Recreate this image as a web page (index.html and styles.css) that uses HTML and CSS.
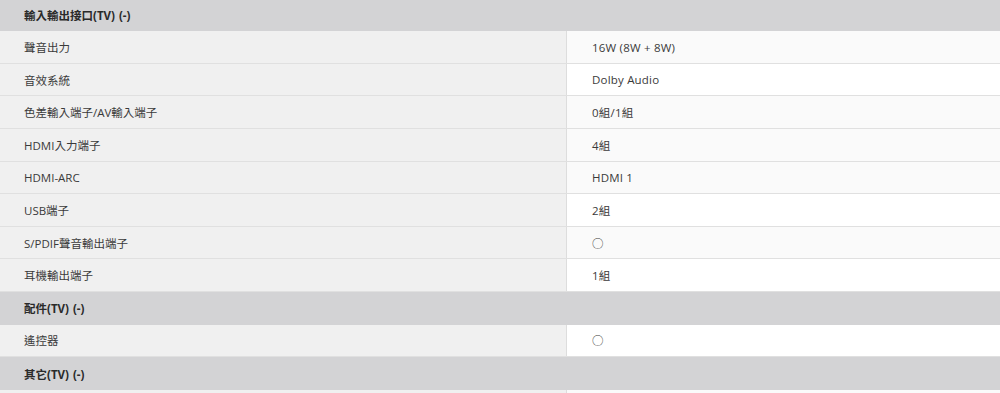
FILE: index.html
```html
<!DOCTYPE html>
<html lang="zh-Hant">
<head>
<meta charset="utf-8">
<link rel="stylesheet" href="styles.css">
</head>
<body>
<div class="spec">
  <div class="head">輸入輸出接口(TV) (-)</div>
  <div class="row alt"><div class="k">聲音出力</div><div class="v">16W (8W + 8W)</div></div>
  <div class="row"><div class="k">音效系統</div><div class="v">Dolby Audio</div></div>
  <div class="row alt"><div class="k">色差輸入端子/AV輸入端子</div><div class="v">0組/1組</div></div>
  <div class="row alt"><div class="k">HDMI入力端子</div><div class="v">4組</div></div>
  <div class="row alt"><div class="k">HDMI-ARC</div><div class="v">HDMI 1</div></div>
  <div class="row"><div class="k">USB端子</div><div class="v">2組</div></div>
  <div class="row alt"><div class="k">S/PDIF聲音輸出端子</div><div class="v">○</div></div>
  <div class="row"><div class="k">耳機輸出端子</div><div class="v">1組</div></div>
  <div class="head">配件(TV) (-)</div>
  <div class="row"><div class="k">遙控器</div><div class="v">○</div></div>
  <div class="head">其它(TV) (-)</div>
  <div class="row alt"><div class="k">&nbsp;</div><div class="v">&nbsp;</div></div>
</div>
</body>
</html>
```

FILE: styles.css
```css
html, body {
  margin: 0;
  padding: 0;
  background: #ffffff;
}
body {
  font-family: "Open Sans", "Noto Sans CJK TC", sans-serif;
  font-size: 11.5px;
  color: #3a3a3a;
  overflow: hidden;
}
.spec {
  margin-top: -1.3px;
}
.head {
  height: 32.6px;
  box-sizing: border-box;
  background: #d3d3d5;
  display: flex;
  align-items: center;
  padding-left: 24px;
  font-weight: 700;
  color: #2a2a2a;
  word-spacing: 1px;
}
.row {
  display: grid;
  grid-template-columns: 567px 1fr;
  height: 32.6px;
  box-sizing: border-box;
  border-bottom: 1px solid #e0e0e0;
  background: #ffffff;
}
.row.alt {
  background: #fafafa;
}
.k {
  background: #f0f0f0;
  border-right: 1px solid #dddddd;
  display: flex;
  align-items: center;
  padding-left: 24px;
}
.v {
  display: flex;
  align-items: center;
  padding-left: 25px;
  letter-spacing: 0.2px;
}
```
